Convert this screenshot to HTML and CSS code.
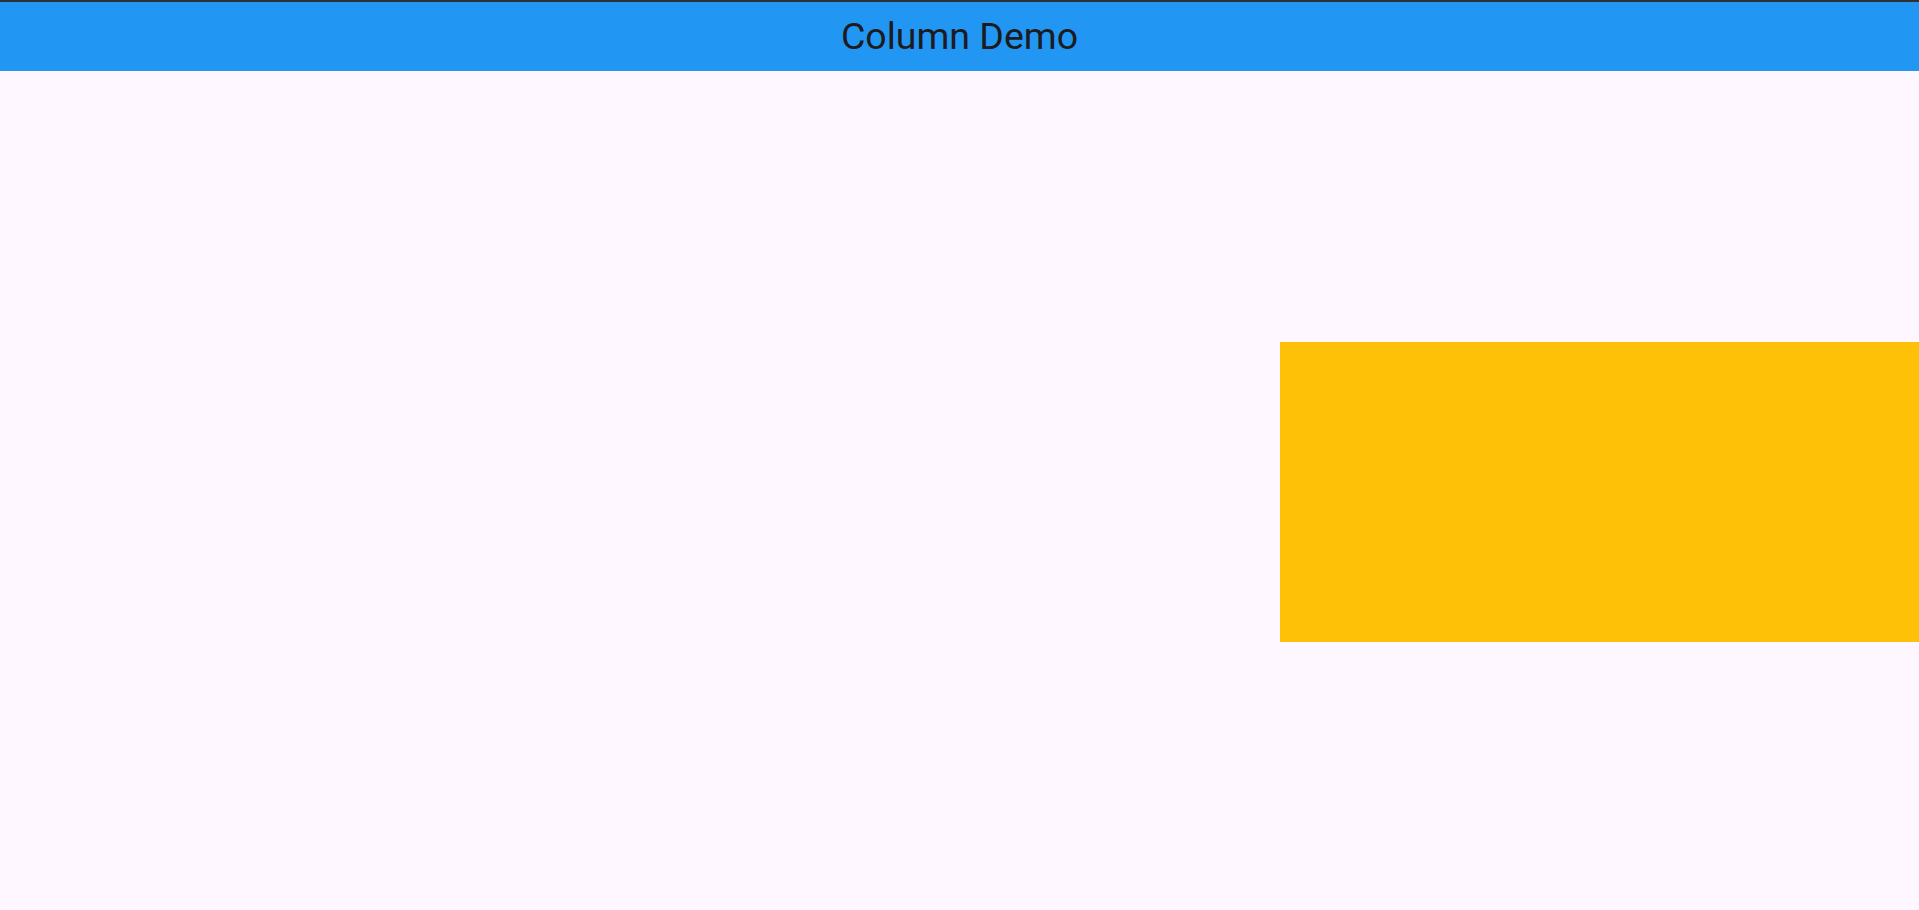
FILE: index.html
```html
<!DOCTYPE html>
<html lang="en">
<head>
<meta charset="utf-8">
<title>Column Demo</title>
<link rel="stylesheet" href="styles.css">
</head>
<body>
<div class="app">
  <header class="appbar">
    <h1 class="title">Column Demo</h1>
  </header>
  <main class="content">
    <div class="box"></div>
  </main>
</div>
</body>
</html>
```

FILE: styles.css
```css
html, body {
  margin: 0;
  padding: 0;
  height: 100%;
}
body {
  background: #FEF7FF;
  font-family: Roboto, "Noto Sans", sans-serif;
  overflow: hidden;
}
.app {
  display: flex;
  flex-direction: column;
  height: 100%;
}
.appbar {
  height: 69px;
  border-top: 2px solid #303030;
  background: #2196F3;
  display: flex;
  align-items: center;
  justify-content: center;
  flex: none;
}
.title {
  margin: 0;
  font-size: 37.5px;
  font-weight: 400;
  color: #1D1B20;
  line-height: 1;
}
.content {
  flex: 1;
  display: flex;
  flex-direction: column;
  align-items: flex-end;
  justify-content: center;
  padding-top: 3px;
}
.box {
  width: 639px;
  height: 300px;
  background: #FFC107;
}
```
